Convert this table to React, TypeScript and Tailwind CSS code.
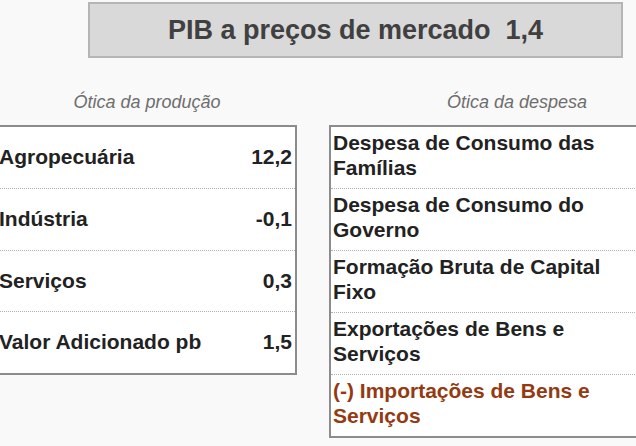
import React from "react";

const left = [
  ["Agropecuária", "12,2"],
  ["Indústria", "-0,1"],
  ["Serviços", "0,3"],
  ["Valor Adicionado pb", "1,5"],
];

const right: [string, string, boolean][] = [
  ["Despesa de Consumo das", "Famílias", false],
  ["Despesa de Consumo do", "Governo", false],
  ["Formação Bruta de Capital", "Fixo", false],
  ["Exportações de Bens e", "Serviços", false],
  ["(-) Importações de Bens e", "Serviços", true],
];

export default function App() {
  return (
    <div
      className="w-[636px] h-[446px] overflow-hidden bg-[#f9f9f9] text-[#222222]"
      style={{ fontFamily: '"Liberation Sans", Arial, sans-serif' }}
    >
      <div className="mt-[2px] ml-[88px] w-[535px] h-[56px] border-2 border-[#b5b5b5] bg-[#d9d9d9] flex items-center justify-center text-[27px] font-bold text-[#404040] whitespace-pre">
        {"PIB a preços de mercado  1,4"}
      </div>
      <div className="flex">
        <div className="-ml-[3px] w-[300px] shrink-0">
          <div className="mt-[32px] h-[24px] leading-[24px] text-[18px] italic text-[#6e6e6e] text-center">
            Ótica da produção
          </div>
          <div className="mt-[11px] h-[250px] border-2 border-[#8c8c8c] bg-white flex flex-col">
            {left.map(([l, v], i) => (
              <div
                key={l}
                className={`flex-1 flex items-center justify-between pl-[0px] pr-[3px] pb-[1px] text-[21px] font-bold ${
                  i < left.length - 1 ? "border-b border-dotted border-[#b0b0b0]" : ""
                }`}
              >
                <span>{l}</span>
                <span>{v}</span>
              </div>
            ))}
          </div>
        </div>
        <div className="ml-[32px] w-[376px] shrink-0">
          <div className="mt-[32px] h-[24px] leading-[24px] text-[18px] italic text-[#6e6e6e] text-center">
            Ótica da despesa
          </div>
          <div className="mt-[11px] h-[313px] border-2 border-[#8c8c8c] bg-white flex flex-col">
            {right.map(([a, b, red], i) => (
              <div
                key={a}
                className={`flex-1 pt-[3px] pl-[2px] text-[21px] leading-[25px] font-bold ${
                  red ? "text-[#943a12]" : ""
                } ${i < right.length - 1 ? "border-b border-dotted border-[#b0b0b0]" : ""}`}
              >
                <div>{a}</div>
                <div>{b}</div>
              </div>
            ))}
          </div>
        </div>
      </div>
    </div>
  );
}
